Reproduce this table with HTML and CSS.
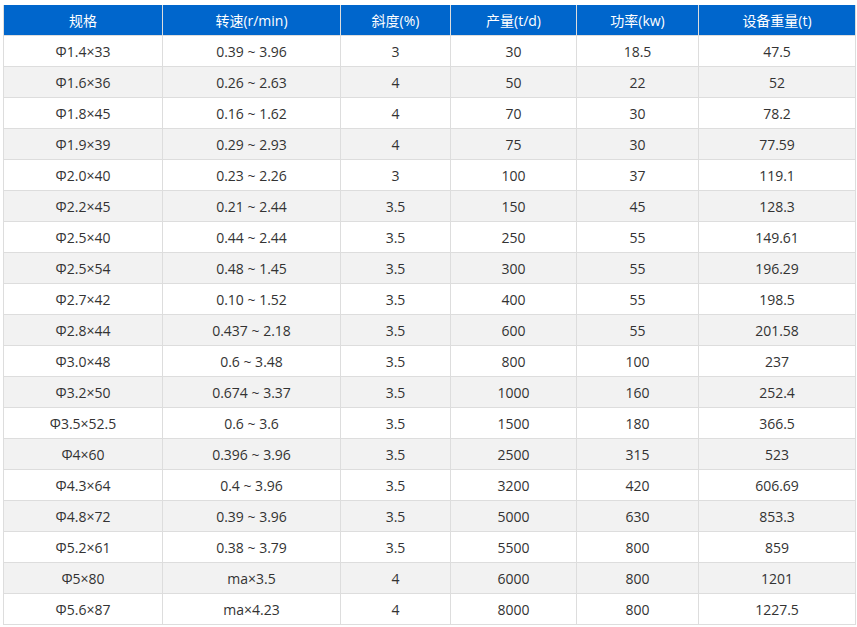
FILE: index.html
```html
<!DOCTYPE html>
<html lang="zh">
<head>
<meta charset="utf-8">
<link rel="stylesheet" href="styles.css">
</head>
<body>
<table class="spec">
<colgroup>
<col class="c1"><col class="c2"><col class="c3"><col class="c4"><col class="c5"><col class="c6">
</colgroup>
<thead>
<tr><th>规格</th><th>转速(r/min)</th><th>斜度(%)</th><th>产量(t/d)</th><th>功率(kw)</th><th>设备重量(t)</th></tr>
</thead>
<tbody>
<tr><td>Φ1.4×33</td><td>0.39 ~ 3.96</td><td>3</td><td>30</td><td>18.5</td><td>47.5</td></tr>
<tr><td>Φ1.6×36</td><td>0.26 ~ 2.63</td><td>4</td><td>50</td><td>22</td><td>52</td></tr>
<tr><td>Φ1.8×45</td><td>0.16 ~ 1.62</td><td>4</td><td>70</td><td>30</td><td>78.2</td></tr>
<tr><td>Φ1.9×39</td><td>0.29 ~ 2.93</td><td>4</td><td>75</td><td>30</td><td>77.59</td></tr>
<tr><td>Φ2.0×40</td><td>0.23 ~ 2.26</td><td>3</td><td>100</td><td>37</td><td>119.1</td></tr>
<tr><td>Φ2.2×45</td><td>0.21 ~ 2.44</td><td>3.5</td><td>150</td><td>45</td><td>128.3</td></tr>
<tr><td>Φ2.5×40</td><td>0.44 ~ 2.44</td><td>3.5</td><td>250</td><td>55</td><td>149.61</td></tr>
<tr><td>Φ2.5×54</td><td>0.48 ~ 1.45</td><td>3.5</td><td>300</td><td>55</td><td>196.29</td></tr>
<tr><td>Φ2.7×42</td><td>0.10 ~ 1.52</td><td>3.5</td><td>400</td><td>55</td><td>198.5</td></tr>
<tr><td>Φ2.8×44</td><td>0.437 ~ 2.18</td><td>3.5</td><td>600</td><td>55</td><td>201.58</td></tr>
<tr><td>Φ3.0×48</td><td>0.6 ~ 3.48</td><td>3.5</td><td>800</td><td>100</td><td>237</td></tr>
<tr><td>Φ3.2×50</td><td>0.674 ~ 3.37</td><td>3.5</td><td>1000</td><td>160</td><td>252.4</td></tr>
<tr><td>Φ3.5×52.5</td><td>0.6 ~ 3.6</td><td>3.5</td><td>1500</td><td>180</td><td>366.5</td></tr>
<tr><td>Φ4×60</td><td>0.396 ~ 3.96</td><td>3.5</td><td>2500</td><td>315</td><td>523</td></tr>
<tr><td>Φ4.3×64</td><td>0.4 ~ 3.96</td><td>3.5</td><td>3200</td><td>420</td><td>606.69</td></tr>
<tr><td>Φ4.8×72</td><td>0.39 ~ 3.96</td><td>3.5</td><td>5000</td><td>630</td><td>853.3</td></tr>
<tr><td>Φ5.2×61</td><td>0.38 ~ 3.79</td><td>3.5</td><td>5500</td><td>800</td><td>859</td></tr>
<tr><td>Φ5×80</td><td>ma×3.5</td><td>4</td><td>6000</td><td>800</td><td>1201</td></tr>
<tr><td>Φ5.6×87</td><td>ma×4.23</td><td>4</td><td>8000</td><td>800</td><td>1227.5</td></tr>
</tbody>
</table>
</body>
</html>
```

FILE: styles.css
```css
html, body {
  margin: 0;
  padding: 0;
  background: #ffffff;
}
body {
  padding: 5px 3px 0 3px;
  font-family: "Open Sans", "Noto Sans CJK SC", sans-serif;
  font-size: 14px;
  color: #333333;
}
.spec {
  border-collapse: collapse;
  table-layout: fixed;
  width: 852px;
}
.c1 { width: 159px; }
.c2 { width: 178px; }
.c3 { width: 110px; }
.c4 { width: 126px; }
.c5 { width: 122px; }
.c6 { width: 157px; }
.spec th {
  background: #0066cc;
  color: #ffffff;
  font-weight: normal;
  height: 30px;
  padding: 0;
  border: 1px solid #dddddd;
  border-top: none;
  border-bottom: none;
  text-align: center;
  vertical-align: middle;
}
.spec th + th {
  border-left: 1px solid #5aa0e6;
}
.spec td {
  height: 30px;
  padding: 0;
  border: 1px solid #dddddd;
  text-align: center;
  vertical-align: middle;
}
.spec tbody tr:nth-child(even) td {
  background: #f2f2f2;
}
```
